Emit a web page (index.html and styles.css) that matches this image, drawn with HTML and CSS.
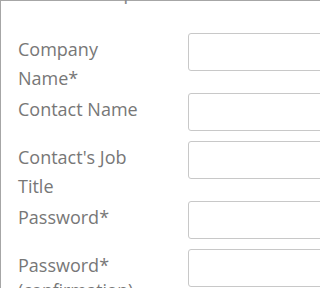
FILE: index.html
```html
<!DOCTYPE html>
<html>
<head>
<meta charset="utf-8">
<link rel="stylesheet" href="styles.css">
</head>
<body>
<div class="page">
<h2 class="title">Account Setup</h2>
<div class="panel">
  <div class="row">
    <label class="label">Company Name*</label>
    <input class="field" type="text">
  </div>
  <div class="row">
    <label class="label">Contact Name</label>
    <input class="field" type="text">
  </div>
  <div class="row">
    <label class="label">Contact's Job Title</label>
    <input class="field" type="text">
  </div>
  <div class="row">
    <label class="label">Password*</label>
    <input class="field" type="password">
  </div>
  <div class="row">
    <label class="label">Password*<span class="hint">(confirmation)</span></label>
    <input class="field" type="password">
  </div>
</div>
</div>
</body>
</html>
```
FILE: styles.css
```css
html, body {
  margin: 0;
  padding: 0;
  background: #fff;
}
body {
  font-family: "Open Sans", "Liberation Sans", sans-serif;
  color: #777;
}
.page {
  width: 100%;
  height: 288px;
  overflow: hidden;
}
.title {
  margin: -18px 0 0 0;
  height: 18px;
  padding-left: 1px;
  font-size: 20px;
  line-height: 20px;
  font-weight: 400;
  color: #8a8a8a;
  white-space: nowrap;
}
.panel {
  box-sizing: border-box;
  width: 100%;
  border-top: 1px solid #a6a6a6;
  border-left: 1px solid #a6a6a6;
  padding: 32px 0 0 17px;
}
.row {
  display: grid;
  grid-template-columns: 132px 240px;
  column-gap: 38px;
  align-items: start;
}
.label {
  font-size: 18px;
  line-height: 29px;
  padding-top: 2px;
  color: #777;
}
.hint {
  display: block;
  font-size: 17.5px;
  line-height: 20px;
}
.field {
  box-sizing: border-box;
  height: 38px;
  width: 240px;
  margin: 0 0 10px 0;
  border: 1px solid #c8c8c8;
  border-radius: 3px;
  background: #fff;
}
```
